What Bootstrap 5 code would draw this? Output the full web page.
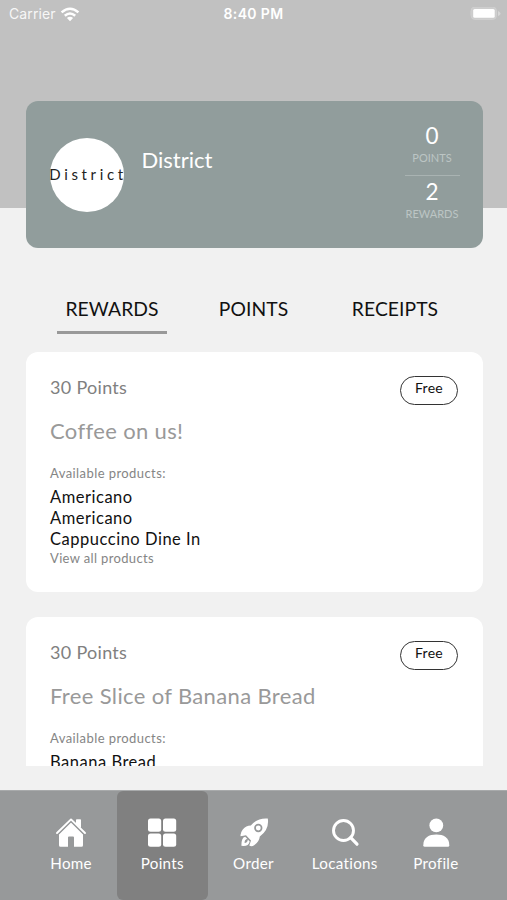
<!DOCTYPE html>
<html lang="en">
<head>
<meta charset="utf-8">
<meta name="viewport" content="width=device-width, initial-scale=1">
<title>District Rewards</title>
<link href="https://cdn.jsdelivr.net/npm/bootstrap@5.3.0/dist/css/bootstrap.min.css" rel="stylesheet">
<style>
body{font-family:Lato,"Open Sans",sans-serif;background:#f1f1f1;color:#111;height:900px;overflow:hidden}
.hero{background:#c1c1c1;height:208px}
.status{height:28px;font-family:Inter,sans-serif;font-size:14px;line-height:28px;padding:0 6px 0 9px;color:#fff}
.status .carrier{letter-spacing:.1px;opacity:.88}
.status .clock{font-weight:600;letter-spacing:.35px;font-size:14px;margin-right:3px}
.member{background:#919d9c;border-radius:12px;height:147px;margin:73px 24.5px 0 25.5px;padding:20.5px 23px 0 24px;color:#fff}
.logo{width:74px;height:74px;background:#fff;margin-top:16px;color:#222;font-size:15px;letter-spacing:3.65px;white-space:nowrap}
.logo span{margin-right:-3px}
.brand{font-size:22px;line-height:28px;margin:24px 0 0 18px}
.stats{width:55px}
.num{font-size:22.5px;line-height:28px;margin-bottom:-2px}
.cap{font-size:11px;line-height:14px;margin-top:3px;color:#bcc5c4;white-space:nowrap}
.rule{border-top:1px solid #a9b3b2;margin:10px 0 2px}
.tabs{width:424.5px;margin-top:47px}
.tabs a{font-size:19.3px;line-height:28px;width:109.5px;height:38.5px;border-bottom:3.5px solid transparent;color:#111;white-space:nowrap;letter-spacing:.08px}
.tabs a.on{border-color:#999}
.feed{height:414.5px;margin:18px 24.5px 0 25.5px;overflow:hidden}
.reward{background:#fff;border-radius:12px;height:240.5px;margin-bottom:24.5px;padding:23.5px 24.5px}
.pts{font-size:18px;line-height:24px;color:#808080}
.pill{width:58px;height:28.5px;border:1.5px solid #333;font-size:14px;line-height:22px;margin-top:1px}
.title{font-size:22px;line-height:28px;color:#999;margin:12.5px 0 -1px}
.sub{font-size:13px;line-height:18px;color:#858585}
.items{font-size:16.5px;line-height:21px;margin-top:5px}
.dock{background:#97999a;height:110px;margin-top:24px;padding:0 25.5px;border-top:1px solid #a8aaab}
.dock a{color:#fff;font-size:15.2px;line-height:20px;padding-top:26px;border-radius:6px;width:91.3px;white-space:nowrap}
.dock a.on{background:#808080}
.dock svg{width:32px;height:32px;margin-bottom:4px}
.a{letter-spacing:.3px}
.title.a{letter-spacing:.36px}
.items.a{letter-spacing:.52px}
.sub.a{letter-spacing:.42px}
.sub.more{margin-top:-1px;letter-spacing:.35px}
</style>
<script src="https://cdn.jsdelivr.net/npm/bootstrap@5.3.0/dist/js/bootstrap.bundle.min.js"></script>
</head>
<body>
<header class="hero">
  <div class="status row g-0">
    <div class="col d-flex align-items-center"><span class="carrier">Carrier</span>
      <svg class="ms-1" width="20" height="15" viewBox="0 0 20 15"><g fill="none" stroke="#fff" stroke-width="2.5"><path d="M1.6 5.4Q10-2 18.4 5.4"/><path d="M4.8 8.8Q10 4.2 15.2 8.8"/></g><path d="M10 14.2 6.9 11Q10 8.3 13.1 11Z" fill="#fff"/></svg></div>
    <div class="col-auto clock">8:40 PM</div>
    <div class="col d-flex align-items-center justify-content-end">
      <svg width="31" height="15" viewBox="0 0 31 15"><rect x="1" y="0" width="25.5" height="12.5" rx="4" fill="#cdcdcd" stroke="#d0d0d0"/><rect x="3.2" y="2" width="21.5" height="8.7" rx="1.5" fill="#fff"/><path d="M28 4v5q2.5-1 2.5-2.5T28 4Z" fill="#d6d6d6"/></svg></div>
  </div>
  <section class="member d-flex align-items-start">
    <div class="logo rounded-circle d-flex align-items-center justify-content-center flex-shrink-0"><span>District</span></div>
    <div class="brand">District</div>
    <div class="stats ms-auto text-center">
      <div class="num">0</div><div class="cap">POINTS</div>
      <div class="rule"></div>
      <div class="num">2</div><div class="cap">REWARDS</div>
    </div>
  </section>
</header>
<main class="pt-4 mt-3">
  <nav class="tabs mx-auto d-flex justify-content-around">
    <a class="on text-center text-decoration-none" href="#">REWARDS</a>
    <a class="text-center text-decoration-none" href="#">POINTS</a>
    <a class="text-center text-decoration-none" href="#">RECEIPTS</a>
  </nav>
  <div class="feed">
    <article class="reward">
      <div class="d-flex justify-content-between"><div class="pts a">30 Points</div><div class="pill rounded-pill text-center a">Free</div></div>
      <div class="title a">Coffee on us!</div>
      <div class="sub a mt-3 pt-1">Available products:</div>
      <div class="items a"><div>Americano</div><div>Americano</div><div>Cappuccino Dine In</div></div>
      <div class="sub more a">View all products</div>
    </article>
    <article class="reward">
      <div class="d-flex justify-content-between"><div class="pts a">30 Points</div><div class="pill rounded-pill text-center a">Free</div></div>
      <div class="title a">Free Slice of Banana Bread</div>
      <div class="sub a mt-3 pt-1">Available products:</div>
      <div class="items a"><div>Banana Bread</div></div>
    </article>
  </div>
</main>
<nav class="dock d-flex">
  <a class="d-flex flex-column align-items-center text-decoration-none" href="#">
    <svg viewBox="0 0 32 32" fill="#fff"><path d="M16 5.2 28 17v11.2q0 1.5-1.500 1.500H19V20.500q0-1-1-1h-4q-1 0-1 1V29.700H5.500Q4 29.700 4 28.200V17Z"/><path d="M1.900 16.300 16 2.500 30.100 16.300" fill="none" stroke="#97999a" stroke-width="4.500"/><path d="M21 7V3q0-.8.800-.8h3.400q.8 0 .8.800v8Z"/><path d="M2 16 16 2.400 30 16" fill="none" stroke="#fff" stroke-width="1.900" stroke-linecap="round" stroke-linejoin="round"/></svg>
    <span class="a">Home</span></a>
  <a class="on d-flex flex-column align-items-center text-decoration-none" href="#">
    <svg viewBox="0 0 32 32" fill="#fff"><rect x="2" y="1.500" width="13.200" height="13.200" rx="2.500"/><rect x="17" y="1.500" width="13.200" height="13.200" rx="2.500"/><rect x="2" y="16.500" width="13.200" height="13.200" rx="2.500"/><rect x="17" y="16.500" width="13.200" height="13.200" rx="2.500"/></svg>
    <span class="a">Points</span></a>
  <a class="d-flex flex-column align-items-center text-decoration-none" href="#">
    <svg viewBox="0 0 32 32" fill="#fff"><path d="M29.800 1.600Q19 .8 12.800 8.500 8 8.600 4.800 12.400 2 16 2.600 19.200L8 18.300 13 23.400 11.300 28.500Q13.500 30.300 16.500 28 21.300 24.500 21.800 19.500 31.500 12.500 29.800 1.600Z"/><path d="M7.200 19.800Q3.200 20.600 3.400 28.800 10.500 29.800 11.700 24.400L9.800 22.500Q9.700 25.800 6.600 26 6.400 22.800 9.200 21.800Z"/><circle cx="20.300" cy="11" r="3.300" fill="none" stroke="#97999a" stroke-width="1.700"/></svg>
    <span class="a">Order</span></a>
  <a class="d-flex flex-column align-items-center text-decoration-none" href="#">
    <svg viewBox="0 0 32 32" fill="none" stroke="#fff" stroke-width="2.900"><circle cx="14.500" cy="13.500" r="10"/><path d="m21.700 20.700 6.300 6.500" stroke-linecap="round" stroke-width="3.200"/></svg>
    <span class="a">Locations</span></a>
  <a class="d-flex flex-column align-items-center text-decoration-none" href="#">
    <svg viewBox="0 0 32 32" fill="#fff"><circle cx="16.300" cy="8.400" r="6.900"/><path d="M3.300 28.200C3.300 20.500 9 17.500 16.300 17.500S29.300 20.500 29.300 28.200Q29.300 29.700 27.800 29.700H4.800Q3.300 29.700 3.300 28.200Z"/></svg>
    <span class="a">Profile</span></a>
</nav>
</body>
</html>
